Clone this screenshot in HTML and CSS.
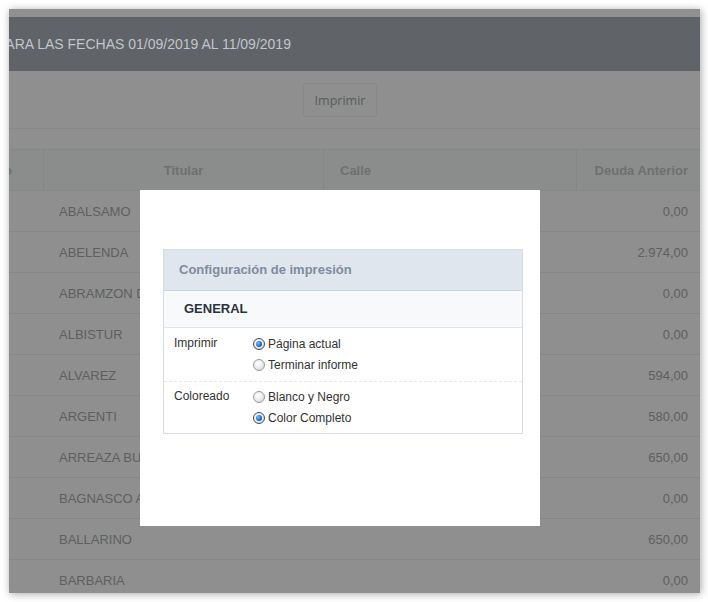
FILE: index.html
```html
<!DOCTYPE html>
<html lang="es">
<head>
    <meta charset="UTF-8">
    <meta name="viewport" content="width=device-width, initial-scale=1.0">
    <title>Informe de deudas</title>
    <link rel="stylesheet" href="styles.css">
</head>
<body>

    <div class="ventana">
        <div class="franja"></div>
        <header class="titulo">
            <h1>PARA LAS FECHAS 01/09/2019 AL 11/09/2019</h1>
        </header>
        <div class="barra">
            <button class="btn-imprimir" type="button">Imprimir</button>
        </div>

        <div class="tabla">
            <div class="fila cabecera">
                <div class="celda nro">Nro</div>
                <div class="celda titular">Titular</div>
                <div class="celda calle">Calle</div>
                <div class="celda monto">Deuda Anterior</div>
            </div>
            <div class="fila"><div class="celda"></div><div class="celda">ABALSAMO</div><div class="celda"></div><div class="celda monto">0,00</div></div>
            <div class="fila"><div class="celda"></div><div class="celda">ABELENDA</div><div class="celda"></div><div class="celda monto">2.974,00</div></div>
            <div class="fila"><div class="celda"></div><div class="celda">ABRAMZON DE</div><div class="celda"></div><div class="celda monto">0,00</div></div>
            <div class="fila"><div class="celda"></div><div class="celda">ALBISTUR</div><div class="celda"></div><div class="celda monto">0,00</div></div>
            <div class="fila"><div class="celda"></div><div class="celda">ALVAREZ</div><div class="celda"></div><div class="celda monto">594,00</div></div>
            <div class="fila"><div class="celda"></div><div class="celda">ARGENTI</div><div class="celda"></div><div class="celda monto">580,00</div></div>
            <div class="fila"><div class="celda"></div><div class="celda">ARREAZA BUSTOS</div><div class="celda"></div><div class="celda monto">650,00</div></div>
            <div class="fila"><div class="celda"></div><div class="celda">BAGNASCO ALBERTO</div><div class="celda"></div><div class="celda monto">0,00</div></div>
            <div class="fila"><div class="celda"></div><div class="celda">BALLARINO</div><div class="celda"></div><div class="celda monto">650,00</div></div>
            <div class="fila"><div class="celda"></div><div class="celda">BARBARIA</div><div class="celda"></div><div class="celda monto">0,00</div></div>
        </div>

        <!-- ventana modal de impresion -->
        <div class="modal">
            <div class="panel">
                <div class="panel-titulo">Configuración de impresión</div>
                <div class="panel-seccion">GENERAL</div>
                <div class="opcion">
                    <span class="opcion-nombre">Imprimir</span>
                    <div class="opcion-valores">
                        <label><input type="radio" name="imprimir" checked> Página actual</label>
                        <label><input type="radio" name="imprimir"> Terminar informe</label>
                    </div>
                </div>
                <div class="opcion ultima">
                    <span class="opcion-nombre">Coloreado</span>
                    <div class="opcion-valores">
                        <label><input type="radio" name="color"> Blanco y Negro</label>
                        <label><input type="radio" name="color" checked> Color Completo</label>
                    </div>
                </div>
            </div>
        </div>
    </div>

</body>
</html>
```

FILE: styles.css
```css
body {
    margin: 0;
    background: #fff;
    font-family: "Liberation Sans", Arial, sans-serif;
}

.ventana {
    position: relative;
    margin: 9px;
    width: 691px;
    height: 584px;
    overflow: hidden;
    background: #8e8f8e;
    box-shadow: 1px 1px 8px rgba(0, 0, 0, 0.35);
}

.franja {
    height: 8px;
    background: #909090;
}

.titulo {
    height: 54px;
    background: #606368;
    display: flex;
    align-items: center;
}
.titulo h1 {
    margin: 0 0 0 -12px;
    font-size: 14px;
    font-weight: normal;
    color: #c3c5c8;
    white-space: nowrap;
}

.barra {
    height: 45px;
    padding-top: 12px;
    border-bottom: 1px solid #878888;
    margin-bottom: 20px;
}
.btn-imprimir {
    margin-left: 294px;
    width: 74px;
    height: 34px;
    background: #8e8f8e;
    border: 1px solid #878888;
    font-family: "Open Sans", sans-serif;
    font-size: 12.5px;
    color: #575b5f;
    padding: 0;
}

.tabla {
    margin-left: -60px;
    border-top: 1px solid #858686;
}
.fila {
    display: grid;
    grid-template-columns: 95px 280px 253px 123px;
    height: 40px;
    border-bottom: 1px solid #868787;
}
.celda {
    box-sizing: border-box;
    display: flex;
    align-items: center;
    padding-left: 15px;
    font-size: 13px;
    color: #5e5f60;
    white-space: nowrap;
    overflow: hidden;
}
.celda.monto {
    justify-content: flex-end;
    padding: 0 12px 0 0;
}

.cabecera {
    background: #8b8c8c;
}
.cabecera .celda {
    font-weight: bold;
    color: #6e7070;
    border-right: 1px solid #848585;
}
.cabecera .celda:last-child {
    border-right: none;
}
.cabecera .nro {
    justify-content: flex-end;
    padding-right: 31px;
}
.cabecera .titular {
    justify-content: center;
    padding: 0;
}
.cabecera .calle {
    padding-left: 16px;
}

/* modal */
.modal {
    position: absolute;
    left: 131px;
    top: 181px;
    width: 400px;
    height: 336px;
    background: #fff;
}
.panel {
    margin: 59px 17px 0 23px;
    border: 1px solid #d6dde6;
}
.panel-titulo {
    height: 40px;
    line-height: 40px;
    padding-left: 15px;
    background: #dfe6ee;
    border-bottom: 1px solid #cdd6e0;
    font-size: 13px;
    font-weight: bold;
    color: #7e8c9e;
}
.panel-seccion {
    height: 36px;
    line-height: 36px;
    padding-left: 20px;
    background: #f7f9fb;
    border-bottom: 1px solid #e1e6ec;
    font-size: 13px;
    font-weight: bold;
    color: #2b333d;
}
.opcion {
    display: flex;
    padding: 5px 0 6px 10px;
    border-bottom: 1px dashed #e6e9ed;
    font-size: 12px;
    color: #333;
}
.opcion.ultima {
    border-bottom: none;
    padding: 4px 0 5px 10px;
}
.opcion-nombre {
    width: 79px;
    line-height: 21px;
}
.opcion-valores {
    display: flex;
    flex-direction: column;
}
.opcion-valores label {
    display: flex;
    align-items: center;
    height: 21px;
}

input[type="radio"] {
    appearance: none;
    -webkit-appearance: none;
    box-sizing: border-box;
    width: 12px;
    height: 12px;
    margin: 0 3px 0 0;
    border: 1px solid #9c9c9c;
    border-radius: 50%;
    background: radial-gradient(circle at 40% 35%, #fff 0%, #eee 45%, #cfcfcf 100%);
    position: relative;
}
input[type="radio"]:checked {
    border-color: #3d4a5c;
}
input[type="radio"]:checked::after {
    content: "";
    position: absolute;
    left: 2px;
    top: 2px;
    width: 6px;
    height: 6px;
    border-radius: 50%;
    background: radial-gradient(circle at 35% 35%, #7cc4ff 0%, #1a6fd0 55%, #0b3f86 100%);
}
```
